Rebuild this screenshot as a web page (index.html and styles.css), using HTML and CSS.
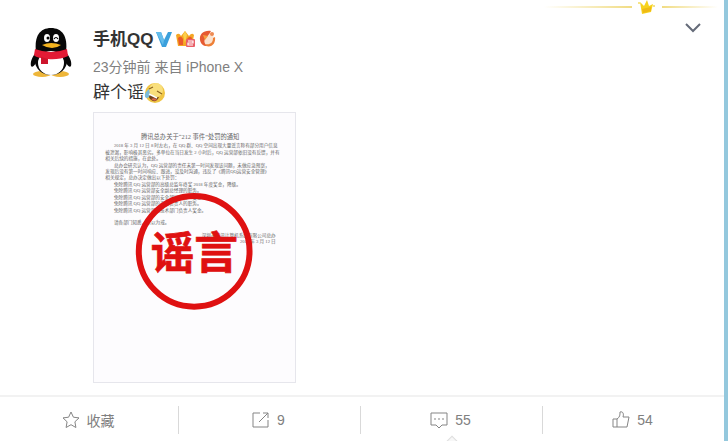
FILE: index.html
```
<!DOCTYPE html>
<html lang="zh-CN">
<head>
    <meta charset="UTF-8">
    <meta name="viewport" content="width=device-width, initial-scale=1.0">
    <title>手机QQ</title>
    <link rel="stylesheet" href="styles.css">
</head>
<body>
    <article class="card">
        <div class="crown-line">
            <span class="line line-left"></span>
            <svg class="crown" viewBox="0 0 18 16" aria-hidden="true">
                <path d="M2 3l4 4 3-6 2 6 4-2-2 8-9 2z" fill="#f7d21c"/>
                <path d="M4 10l9-2v4l-8 2z" fill="#efba14"/>
                <circle cx="1" cy="4" r="1" fill="#f5dc60"/>
                <circle cx="16" cy="7" r="1" fill="#f2d95c"/>
            </svg>
            <span class="line line-right"></span>
        </div>

        <div class="post">
            <a href="#" class="avatar" aria-label="手机QQ">
                <svg viewBox="0 0 42 50" aria-hidden="true">
                    <ellipse cx="12" cy="46" rx="9" ry="3" fill="#eeb63a"/>
                    <ellipse cx="30" cy="46" rx="9" ry="3" fill="#eeb63a"/>
                    <path d="M7 23C2 29 0 34 1 38c1 2 3 0 5-3h30c2 3 4 5 5 3 1-4-1-9-6-15z" fill="#080808"/>
                    <ellipse cx="21" cy="33" rx="16" ry="14" fill="#080808"/>
                    <path d="M6 24C4 8 10 0 21 0s17 8 15 24z" fill="#080808"/>
                    <ellipse cx="21" cy="35" rx="13" ry="12" fill="#fff"/>
                    <path d="M5 21q16 6 32 0l1 7q-9 4-20 3v5h-7v-6q-6-1-7-3z" fill="#e31b35"/>
                    <path d="M11 29l7 2v5h-7z" fill="#cd142c"/>
                    <ellipse cx="17" cy="10" rx="3" ry="4" fill="#fff"/>
                    <ellipse cx="26" cy="10" rx="3" ry="4" fill="#fff"/>
                    <circle cx="18" cy="10" r="1.5" fill="#000"/>
                    <path d="M24 11q2-3 4 0" fill="none" stroke="#000" stroke-width="1.2"/>
                    <path d="M12 17q9-4 19 0-4 3-9 3t-10-3z" fill="#f4b41f"/>
                </svg>
            </a>

            <div class="content">
                <div class="name-row">
                    <a href="#" class="name">手机QQ</a>
                    <svg class="verified" viewBox="0 0 16 17" aria-hidden="true">
                        <path d="M0 1h5l3 8 4-8h4l-6 15H6z" fill="#3ba0dc"/>
                        <path d="M0 1h5l3 8-1 5z" fill="#64bdec"/>
                    </svg>
                    <svg class="badge" viewBox="0 0 20 18" aria-hidden="true">
                        <path d="M1 5q3-3 5 1l4-5 4 5q3-4 5-1l-2 11H3z" fill="#f5a623"/>
                        <path d="M3 8q3-3 5 1v6H4zM12 9q3-4 5-1l-1 7h-4z" fill="#ea5a2c"/>
                        <path d="M8 5l2-4 2 4-2 8z" fill="#fbd04b"/>
                        <rect x="11" y="9" width="9" height="8" rx="1" fill="#e95f68"/>
                        <path d="M13 11h5v2h-5v2h5" fill="none" stroke="#fff" stroke-width="1.2"/>
                    </svg>
                    <svg class="badge" viewBox="0 0 20 18" aria-hidden="true">
                        <circle cx="9" cy="9" r="7" fill="#fbe2cf"/>
                        <path d="M13 1C6 0 1 4 2 10c1 4 3 6 7 6-3-3-3-5-2-7 2-3 4-4 6-8z" fill="#e65a32"/>
                        <path d="M7 14c5 1 8-1 8-6l2-1c1 6-3 11-9 9z" fill="#ee8037"/>
                        <path d="M5 5l5 1-3 4z" fill="#f5a03f"/>
                        <circle cx="14" cy="4" r="2" fill="#ee8a52"/>
                    </svg>
                </div>
                <p class="meta">23分钟前 来自 iPhone X</p>
                <p class="text">辟个谣<svg class="emoji" viewBox="0 0 22 22" role="img" aria-label="笑cry">
                    <circle cx="11" cy="11" r="10" fill="#f0c544"/>
                    <circle cx="12" cy="8" r="7" fill="#f9df7c"/>
                    <path d="M4 10q6 6 11 5-2 5-6 4-5-2-5-9z" fill="#71401b"/>
                    <path d="M7 17q4-2 6 1-3 2-6-1z" fill="#d96a4c"/>
                    <path d="M5 7l4-2M13 9l5 3" fill="none" stroke="#8b6420" stroke-width="1.2"/>
                    <path d="M5 7q-5 4-4 8 3 3 5-2z" fill="#79bbdc"/>
                    <path d="M5 12l8 4" stroke="#fff" stroke-width="1.4"/>
                </svg></p>

                <a href="#" class="picture">
                    <svg viewBox="0 0 606 810">
                        <g class="doc">
                            <text class="doc-title" x="290" y="77" text-anchor="middle">腾讯总办关于“212 事件”处罚的通知</text>
                            <text x="60" y="104">2018 年 3 月 12 日 8 时左右，在 QQ 群、QQ 空间出现大量谣言称有部分用户信息</text>
                            <text x="34" y="123">被泄漏，影响极其恶劣。多单位在当日发生 2 小时后，QQ 运营部依旧没有反馈，并有</text>
                            <text x="34" y="142">相关后续的措施，在此处。</text>
                            <text x="60" y="162">总办会研究认为，QQ 运营部的责任未第一时间发现该问题，未做应急预案，</text>
                            <text x="34" y="181">发现后没有第一时间响应、跟进，没及时沟通，违反了《腾讯QQ运营安全管理》</text>
                            <text x="34" y="200">相关规定，总办决定做出以下处罚：</text>
                            <text x="60" y="219">免除腾讯 QQ 运营部的高级总监年终奖 2018 年度奖金，降级。</text>
                            <text x="60" y="239">免除腾讯 QQ 运营部安全副总经理的职务。</text>
                            <text x="60" y="258">免除腾讯 QQ 运营部的安全部门负责人奖金等。</text>
                            <text x="60" y="277">免除腾讯 QQ 运营部的产品负责人的职务。</text>
                            <text x="60" y="297">免除腾讯 QQ 运营部的技术部门负责人奖金。</text>
                            <text x="60" y="335">请各部门知悉，引以为戒。</text>
                            <text x="548" y="374" text-anchor="end">深圳市腾讯计算机系统有限公司总办</text>
                            <text x="548" y="393" text-anchor="end">2018 年 3 月 12 日</text>
                        </g>
                        <g class="stamp">
                            <circle cx="302" cy="417" r="167" fill="none" stroke-width="18"/>
                            <text x="302" y="470" text-anchor="middle">谣言</text>
                        </g>
                    </svg>
                </a>
            </div>

            <button type="button" class="more" aria-label="更多">
                <svg viewBox="0 0 16 10" aria-hidden="true"><path d="M1 1l7 7 7-7"/></svg>
            </button>
        </div>

        <div class="actions">
            <button type="button" class="action">
                <svg viewBox="0 0 18 18" aria-hidden="true"><path d="M9 1l2.4 5.2 5.6.7-4.1 3.9 1 5.7L9 13.7l-4.9 2.8 1-5.7L1 6.9l5.6-.7z"/></svg>
                <span>收藏</span>
            </button>
            <button type="button" class="action share">
                <svg viewBox="0 0 18 18" aria-hidden="true"><path d="M8 2H1v14h15V9M7 11l9-9M11 2h5v5"/></svg>
                <span>9</span>
            </button>
            <button type="button" class="action comment">
                <svg viewBox="0 0 18 18" aria-hidden="true"><path d="M1 2h16v12h-5l-3 3-3-3H1zM4 8h2M8 8h2M12 8h2"/></svg>
                <span>55</span>
            </button>
            <button type="button" class="action like">
                <svg viewBox="0 0 18 18" aria-hidden="true"><path d="M1 8h4v8H1zM5 8c3-2 3-4 3-7 3-1 4 2 3 5h6l-2 10H5"/></svg>
                <span>54</span>
            </button>
        </div>
    </article>
</body>
</html>
```
FILE: styles.css
```
* {
    box-sizing: border-box;
}
body {
    margin: 0;
    background-color: #fff;
    color: #333;
    font-family: "Liberation Sans", "Noto Sans CJK SC", sans-serif;
}
a {
    color: inherit;
    text-decoration: none;
}
button {
    padding: 0;
    border: none;
    background: none;
    font-family: inherit;
    cursor: pointer;
}
svg {
    display: block;
}
p {
    margin: 0;
}
.card {
    min-height: 100vh;
    border-right: 4px solid #94c8dd;
    overflow: hidden;
}

/* gold crown over the post */
.crown-line {
    display: flex;
    justify-content: flex-end;
    align-items: center;
    gap: 6px;
    height: 14px;
    padding-right: 6px;
}
.crown {
    width: 18px;
    height: 16px;
}
.line {
    height: 2px;
}
.line-left {
    width: 88px;
    background: linear-gradient(to right, #fff, #f1dc83);
}
.line-right {
    width: 56px;
    background: linear-gradient(to left, #fff, #f1dc83);
}

.post {
    display: flex;
    align-items: flex-start;
    padding: 12px 22px 12px 30px;
}
.avatar {
    width: 42px;
    margin-top: 2px;
}
.content {
    flex: 1;
    margin-left: 21px;
}
.name-row {
    display: flex;
    align-items: center;
    gap: 3px;
    height: 26px;
}
.name {
    padding-bottom: 4px;
    font-size: 17px;
    font-weight: bold;
}
.verified {
    width: 16px;
    height: 17px;
}
.badge {
    width: 20px;
    height: 18px;
}
.meta {
    margin-top: 2px;
    color: #808080;
    font-family: "Liberation Sans", "Noto Sans CJK SC", sans-serif;
    font-size: 14px;
    line-height: 26px;
}
.text {
    display: flex;
    align-items: center;
    font-size: 17px;
    line-height: 26px;
}
.emoji {
    width: 22px;
    height: 22px;
}
.picture {
    display: block;
    width: 203px;
    margin-top: 6px;
    border: 1px solid #e6e6ec;
    background-color: #fdfcfe;
}
.doc {
    fill: #666;
    font-family: "Liberation Serif", "Noto Sans CJK SC", serif;
    font-size: 14px;
}
.doc-title {
    font-size: 19px;
}
.stamp {
    fill: #df1111;
    stroke: #df1111;
}
.stamp text {
    font-family: "Noto Sans CJK SC", sans-serif;
    font-size: 132px;
    font-weight: bold;
    stroke-width: 2px;
}
.more {
    margin-top: -3px;
    padding: 0 1px;
}
.more svg {
    width: 16px;
    height: 10px;
    fill: none;
    stroke: #656b79;
    stroke-width: 2;
}

.actions {
    display: grid;
    grid-template-columns: 178px 1fr 1fr 1fr;
    padding: 9px 0 8px;
    border-top: 2px solid #f2f2f2;
}
.action {
    display: flex;
    justify-content: center;
    align-items: center;
    gap: 7px;
    height: 28px;
    padding-right: 2px;
    color: #808080;
    font-size: 14px;
}
.action + .action {
    border-left: 1px solid #d9d9d9;
}
.action svg {
    width: 18px;
    height: 18px;
    fill: none;
    stroke: #858585;
    stroke-width: 1;
}
/* small arrow of the opened comment list */
.comment {
    position: relative;
}
.comment::after {
    content: "";
    position: absolute;
    top: 32px;
    left: 50%;
    width: 10px;
    height: 10px;
    margin-left: -6px;
    border: 1px solid #dedede;
    background-color: #f7f7f7;
    transform: rotate(45deg);
}
```
